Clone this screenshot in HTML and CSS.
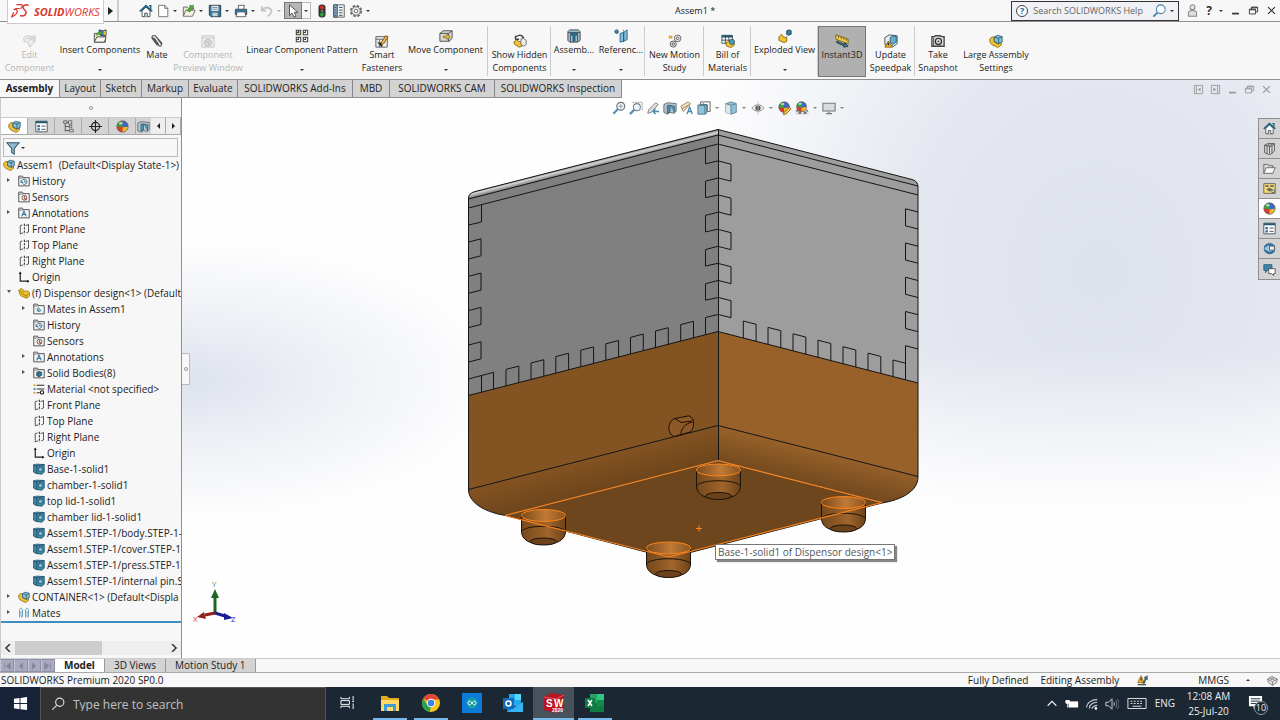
FILE: index.html
```html
<!DOCTYPE html>
<html lang="en">
<head>
<meta charset="utf-8">
<title>Assem1 - SOLIDWORKS</title>
<link rel="stylesheet" href="styles.css">
</head>
<body>
<svg class="defs" aria-hidden="true">
  <defs>
    <symbol id="home" viewBox="0 0 16 16"><path d="M3.5 8v6.5h9V8L8 3.5z" fill="#fff" stroke="#444"/><path d="M1 8.500 8 2l7 6.500" fill="none" stroke="#1f6080" stroke-width="2"/><path d="M11.500 2h2v4" fill="none" stroke="#1f6080" stroke-width="1.500"/><path d="M6.500 14.500v-4h3v4" fill="#cfe3ee" stroke="#444"/></symbol>
    <symbol id="newdoc" viewBox="0 0 16 16"><path d="M3 1.500h7l3.500 3.500v9.500H3z" fill="#fff" stroke="#666"/><path d="M10 1.500V5h3.500" fill="none" stroke="#666"/></symbol>
    <symbol id="opendoc" viewBox="0 0 16 16"><path d="M1.500 14V3.500H6L7.500 5H12v2" fill="#e9e4d0" stroke="#666"/><path d="m1.500 14 3-7H15l-3 7z" fill="#f6f3e4" stroke="#666"/><path d="m6 8 3.500-5.500L8 2l5-.5.500 4.500-1.500-1.500L9 9z" fill="#54a834" stroke="#2f6d1c" stroke-width=".5"/></symbol>
    <symbol id="save" viewBox="0 0 16 16"><path d="M1.500 1.500h13v13h-11l-2-2z" fill="#3d7797" stroke="#234"/><path d="M4 2h8v6H4z" fill="#e4edf2"/><path d="M5 4h6M5 6h6" stroke="#789"/><path d="M5 10h6v4H5z" fill="#c5d2da"/></symbol>
    <symbol id="print" viewBox="0 0 16 16"><path d="M5 6V1.500h7L11 6" fill="#fff" stroke="#555"/><path d="M1.500 6h13v6h-13z" fill="#2f7ca3" stroke="#345"/><path d="m3.500 9-1 5.500h11l-1-5.500z" fill="#fff" stroke="#555"/></symbol>
    <symbol id="undo" viewBox="0 0 16 16"><path d="M2 2.500v5h5M2.500 7C6 2.500 14 4 13 9c-.5 2-2 4-4.500 5" fill="none" stroke="#c4c4c4" stroke-width="2"/></symbol>
    <symbol id="cursor" viewBox="0 0 16 16"><path d="M4 1v12l3-2.500L9 15l2.500-1-2-4.500h4z" fill="#fff" stroke="#444"/></symbol>
    <symbol id="traffic" viewBox="0 0 16 16"><rect x="4" y=".5" width="8" height="15" rx="3.500" fill="#333"/><circle cx="8" cy="4" r="2.300" fill="#e22a20"/><circle cx="8" cy="8" r="1.500" fill="#775"/><circle cx="8" cy="12" r="2.300" fill="#26a63a"/></symbol>
    <symbol id="list" viewBox="0 0 16 16"><path d="M1 1.500h14v13H1z" fill="#fff" stroke="#345"/><path d="M1 1.500h14V4H1z" fill="#24586f"/><path d="M3 6h3v3H3zm0 4h3v3H3z" fill="#2c6f90"/><path d="M8 7.500h5M8 11.500h5" stroke="#333"/></symbol>
    <symbol id="sheet" viewBox="0 0 16 16"><path d="M2 1h12v14H2z" fill="#f3f3f3" stroke="#555"/><path d="M2 1h4v14H2z" fill="#8db8cc" stroke="#345"/><path d="M3 4h2M3 7h2M3 10h2M3 13h2M8 4h4M8 7h4M8 10h4M8 13h4" stroke="#345"/></symbol>
    <symbol id="gear" viewBox="0 0 16 16"><circle cx="8" cy="8" r="6" fill="none" stroke="#666" stroke-width="2" stroke-dasharray="3 1.700"/><circle cx="8" cy="8" r="4.800" fill="#eee" stroke="#666"/><circle cx="8" cy="8" r="2" fill="#fff" stroke="#666"/></symbol>
    <symbol id="part" viewBox="0 0 16 16"><path d="M1 4.500 4 2l3 1.500V7l3-2 4 1 1.500 2v4l-4 3-7.500-3-2-3z" fill="#f2c230" stroke="#97700d"/><path d="M1 4.500 4.500 6v3l6 2.500v3M10.500 11.500 15 8.500" fill="none" stroke="#97700d"/></symbol>
    <symbol id="asm" viewBox="0 0 16 16"><path d="M1 5.500 4 3l2 1v5l4 2.500 4-2v3L10 15.500 3 12 1 9z" fill="#f2c230" stroke="#8b6a15"/><path d="m6 3.500 3.500-2L15 3v6l-4 2-5-2.500z" fill="#87bfd5" stroke="#285b73"/><path d="m6 3.500 5 1.500 4-2M11 5v6" fill="none" stroke="#285b73"/></symbol>
    <symbol id="insert" viewBox="0 0 16 16"><path d="M1.500 15V5H7l1 2h6v8z" fill="#efe9c8" stroke="#444"/><path d="m7 1 4 1 4-1v6l-4 1-4-2z" fill="#2f7ca3" stroke="#245"/><path d="M12 2h3v5h-3z" fill="#f2b51f"/><path d="M3 8c1-5 4-6 7-4L8 7c-2-1-3 0-5 1z" fill="#52a536"/><path d="m1.500 15 3-6H15l-2 6z" fill="#faf8ec" stroke="#444"/></symbol>
    <symbol id="clip" viewBox="0 0 16 16"><path d="m2 3 8 10c1 1.500 4 1 3-1.500L7 3C5 .5 1 2 2.500 5l6 8M4.500 4.500 10 12M6 2l8 9" fill="none" stroke="#555" stroke-width="1.300"/></symbol>
    <symbol id="ghost" viewBox="0 0 16 16"><path d="M1 2h14v13H1zM1 4.500h14" fill="#eee" stroke="#c3c3c3"/><path d="m4 8 4-2 4 2v4l-4 2-4-2zM5 9h4v3" fill="#ddd" stroke="#b9b9b9"/></symbol>
    <symbol id="ghostpart" viewBox="0 0 16 16"><path d="m1 4 3-2 7 1 3-1v6l-6 7-2-5-5-2zM4 5h8v4M7 8l5-5" fill="#eee" stroke="#c3c3c3"/></symbol>
    <symbol id="pattern" viewBox="0 0 16 16"><g fill="#fff" stroke="#444" stroke-width="1.200"><path d="M9.500 1.500h5v5h-5zM1.500 9.500h5v5h-5zM9.500 9.500h5v5h-5z"/><path d="M1.500 1.500h5v5h-5z" fill="#e3d95c"/><path d="M4 1.500V4H1.500M12 1.500V4H9.500M4 9.500V12H1.500M12 9.500V12H9.500" fill="none"/></g></symbol>
    <symbol id="smart" viewBox="0 0 16 16"><path d="M1 3h13v12H1zM1 6h13" fill="#eee" stroke="#555"/><path d="M3 10h5v5M5 7v8" stroke="#555"/><path d="m7 10 5-8 3 1-5 8-3 1z" fill="#f1b73c" stroke="#7a4e18"/></symbol>
    <symbol id="move" viewBox="0 0 16 16"><path d="m1 5 4-3h10v8l-3 4H1z" fill="#d9d9cf" stroke="#444"/><path d="M1 5h10v9M11 5l4-3" fill="none" stroke="#444"/><path d="M5 8h4V6l4 3-4 3v-2H5z" fill="#f2cc3a" stroke="#6a540f" stroke-width=".7"/></symbol>
    <symbol id="hidden" viewBox="0 0 16 16"><path d="M2 5c2-4 8-5 10-1l-2 1M3 2v4h4" fill="none" stroke="#444" stroke-width="1.500"/><path d="m1 9 3-2 6 3v4l-3 1-5-3z" fill="#f2c230" stroke="#8b6a15"/><path d="m9 6 3-1 3 2v5l-3 2-3-2z" fill="#eee" stroke="#666"/></symbol>
    <symbol id="feature" viewBox="0 0 16 16"><path d="m1 3 2-2h10l2 2v10l-3 2H3l-2-2z" fill="#9bb9c7" stroke="#444"/><path d="M1 4h14M4 4v11M12 4v11" stroke="#456"/><path d="M5 5h6v2H9v7H7V7H5z" fill="#2478a3" stroke="#17506e"/></symbol>
    <symbol id="refgeo" viewBox="0 0 16 16"><circle cx="3" cy="3" r="2" fill="#3d87a9" stroke="#1e516b"/><path d="m7 5 4-1v10l-4 1zM11 4l4-3v11l-4 2z" fill="#84c0dd" stroke="#27617f"/><path d="M11 1v14" stroke="#27617f" stroke-dasharray="2 1"/></symbol>
    <symbol id="motion" viewBox="0 0 16 16"><path d="m1 2 4 3M1 5l4-3" stroke="#e79a28" stroke-width="1.500"/><circle cx="11" cy="5" r="3.800" fill="#eee" stroke="#555"/><circle cx="11" cy="5" r="1.500" fill="none" stroke="#555"/><circle cx="6" cy="11.500" r="3.500" fill="#ddd" stroke="#555"/><circle cx="6" cy="11.500" r="1.300" fill="#fff" stroke="#555"/></symbol>
    <symbol id="bom" viewBox="0 0 16 16"><path d="M1 1.500h12v9H1z" fill="#fff" stroke="#345"/><path d="M1 1.500h12V4H1z" fill="#24586f"/><path d="M1 7h12M5 2v9M9 2v9" stroke="#345"/><path d="m6 10 3-2 2 1 4-1v5l-4 2.500-5-2z" fill="#f2c230" stroke="#86650f"/><path d="m10 7 3-1 2 1v4l-3 1-2-1z" fill="#4d9fc0" stroke="#285b73"/></symbol>
    <symbol id="explode" viewBox="0 0 16 16"><path d="m1 9 3-3 2 3 4 1v4l-3 1.500L1 13z" fill="#f2c230" stroke="#86650f"/><path d="m10 2 3-1 2 1v4l-3 1-2-1z" fill="#3a7ea0" stroke="#173f55"/><path d="M10 6v4" stroke="#3a7ea0" stroke-dasharray="1 1"/></symbol>
    <symbol id="instant" viewBox="0 0 16 16"><path d="m1 1 14 5v5L1 6z" fill="#f5d44e" stroke="#755b12"/><path d="M4 2v3M7 3v3M10 4v3M13 5v3" stroke="#755b12"/><path d="m2 8 9 4v-2l4 4-5 1 .5-1.500L2 10z" fill="#3d7f9f" stroke="#234"/></symbol>
    <symbol id="speedpak" viewBox="0 0 16 16"><path d="m1 4 5-3 9 1v9l-4 3-10-2z" fill="#e8f0f4" stroke="#345"/><path d="m7 4 3-2 4 1v6l-4 3-3-2z" fill="#69aecb" stroke="#265a73"/><path d="m1 15 4-7 4.500 7z" fill="#f7c01f" stroke="#805b05"/><path d="M5 10v3" stroke="#222" stroke-width="1.500"/></symbol>
    <symbol id="camera" viewBox="0 0 16 16"><path d="M1 3h3l1-1h6l1 1h3v11H1z" fill="#ddd" stroke="#444" stroke-width="1.500"/><circle cx="8.500" cy="8.500" r="3.500" fill="#eee" stroke="#333" stroke-width="1.500"/><circle cx="8.500" cy="8.500" r="1.200" fill="#444"/><path d="M3 4v10" stroke="#444"/></symbol>
    <symbol id="tree" viewBox="0 0 16 16"><path d="M4 2v12M4 3h4M4 8h6M4 13h6" stroke="#444" fill="none"/><path d="M2 1h4v3H2zM8 1h4v4H8zM9 6.500h3v3H9zM9 11.500h5v3H9z" fill="#ddd" stroke="#555"/></symbol>
    <symbol id="target" viewBox="0 0 16 16"><circle cx="8" cy="8" r="5" fill="none" stroke="#222" stroke-width="1.400"/><path d="M8 0v16M0 8h16" stroke="#222" stroke-width="1.400"/></symbol>
    <symbol id="ball" viewBox="0 0 16 16"><circle cx="8" cy="8" r="7" fill="#d93a2b"/><path d="M8 1a7 7 0 0 0-7 7l7 1z" fill="#38a046"/><path d="M8 9v6a7 7 0 0 0 7-7z" fill="#e9bd2c"/><path d="M8 1v8l7-1a7 7 0 0 0-7-7z" fill="#3769c8"/><circle cx="8" cy="8" r="7" fill="none" stroke="#555" stroke-width=".7"/><ellipse cx="6" cy="4" rx="2.500" ry="1.500" fill="#fff" opacity=".6"/></symbol>
    <symbol id="funnel" viewBox="0 0 16 16"><path d="M1 2h14L9.500 8.500V15L6.500 13V8.500z" fill="#8fb9cc" stroke="#37566a" stroke-width="1.200"/></symbol>
    <symbol id="folder" viewBox="0 0 16 16"><path d="M1 14.500V1.500h5l1 2h8v11z" fill="#f4f4f4" stroke="#555" stroke-width="1.300"/><path d="M1 4h6l1-1" fill="none" stroke="#555"/></symbol>
    <symbol id="f-history" viewBox="0 0 16 16"><use href="#folder"/><path d="M5 9a3.500 3.500 0 1 1 1 2.500M4 7v3h3M9 7v2.500h2" fill="none" stroke="#2b6d8d" stroke-width="1.200"/></symbol>
    <symbol id="f-sensor" viewBox="0 0 16 16"><use href="#folder"/><circle cx="8.500" cy="9" r="3.200" fill="#fff" stroke="#333"/><path d="m8 9 3 3M8 9l1-2" stroke="#c3342a" stroke-width="1.500"/></symbol>
    <symbol id="f-note" viewBox="0 0 16 16"><use href="#folder"/><path d="m5 12.500 3-7 3 7M6 10h4" fill="none" stroke="#26759b" stroke-width="1.500"/></symbol>
    <symbol id="f-mates" viewBox="0 0 16 16"><use href="#folder"/><path d="m5 7 4 5M7 6l4 5M5 9l3 3" stroke="#3b86a8" stroke-width="1.400"/></symbol>
    <symbol id="f-solid" viewBox="0 0 16 16"><use href="#folder"/><path d="m5 7 3-1 3.500 1v4L8 13l-3-1.500z" fill="#2d7797" stroke="#183f52"/></symbol>
    <symbol id="material" viewBox="0 0 16 16"><circle cx="2" cy="3" r="1.500" fill="#d7a829"/><circle cx="2" cy="8" r="1.500" fill="#3b86a8"/><circle cx="2" cy="13" r="1.500" fill="#d7a829"/><path d="M5 3h10M5 8h10M5 13h4" stroke="#222" stroke-width="1.300"/><circle cx="12" cy="12.500" r="2.200" fill="none" stroke="#222" stroke-width="1.500"/></symbol>
    <symbol id="plane" viewBox="0 0 16 16"><path d="M6 2.500 3 3.500v11l4-1.500M10 3.500l4-1.500v10l-3 1" fill="none" stroke="#444" stroke-width="1.200"/><path d="M8.500 1v14" stroke="#222" stroke-width="1.300" stroke-dasharray="3 1.500"/></symbol>
    <symbol id="origin" viewBox="0 0 16 16"><path d="M3 2v11.500h11" fill="none" stroke="#222" stroke-width="1.600"/><path d="m1 4 2-3.500L5 4zM12 11.500l3.500 2-3.500 2z" fill="#222"/></symbol>
    <symbol id="solid" viewBox="0 0 16 16"><path d="m.5 2.500 4-1L15 2v10l-3 3-8-1-3.500-2z" fill="#3b88aa" stroke="#1c4a60"/><path d="M.5 2.500 5 4l10-2M5 4v10" fill="none" stroke="#1c4a60"/><circle cx="10" cy="8.500" r="3" fill="#7bbbd6" stroke="#1c4a60"/></symbol>
    <symbol id="mates" viewBox="0 0 16 16"><path d="M2 14V4c0-3 4-3 4 0v8c0 2-2 2-2 0V5M10 14V4c0-3 4-3 4 0v8c0 2-2 2-2 0V5" fill="none" stroke="#5d9dbd" stroke-width="1.200"/></symbol>
    <symbol id="lens" viewBox="0 0 16 16"><circle cx="10" cy="6" r="4.500" fill="#eef5f9" stroke="#68737c" stroke-width="1.300"/><path d="M10 3.500v5M7.500 6h5" stroke="#8a9299"/><path d="m6.500 9.500-5 5" stroke="#5590ae" stroke-width="2.500"/></symbol>
    <symbol id="lensbox" viewBox="0 0 16 16"><path d="M4 1.500h11v10" fill="none" stroke="#888" stroke-dasharray="2 1"/><circle cx="9" cy="7" r="4" fill="#eef5f9" stroke="#7b868f" stroke-width="1.200"/><path d="m6 10-5 5" stroke="#5590ae" stroke-width="2.500"/></symbol>
    <symbol id="prev" viewBox="0 0 16 16"><path d="m3 10 8-8 3 2-8 9-4 1z" fill="#ddd" stroke="#777"/><path d="M8 12h7M11 9l-3 3 3 3" fill="none" stroke="#4a8cab" stroke-width="1.600"/></symbol>
    <symbol id="section" viewBox="0 0 16 16"><path d="m1 4 4-2 10 1v9l-3 2-4-1-3 2-4-2z" fill="#b9c5cc" stroke="#566"/><path d="M5 5v9l3-2V5zM8 5l5 1v8" fill="#4c95b7" stroke="#385e71"/></symbol>
    <symbol id="dyn" viewBox="0 0 16 16"><path d="m1 6 8-5 3 2-8 9zM2 9l9-5" fill="#f1e5c8" stroke="#987b51"/><path d="m8 15 3-8 3 8M9 12h4" fill="none" stroke="#4387aa" stroke-width="1.500"/></symbol>
    <symbol id="orient" viewBox="0 0 16 16"><path d="M4 4V1h11v11h-3" fill="none" stroke="#555"/><path d="m1 5 3-1h7v10l-2 1H1z" fill="#8fc3da" stroke="#4a7085"/><path d="M1 5h8v10M9 5l2-1" fill="none" stroke="#4a7085"/><path d="M12 4v8M7 2v3" stroke="#666"/></symbol>
    <symbol id="shade" viewBox="0 0 16 16"><path d="m2 3 6-2 6 2v10l-6 2-6-2z" fill="#8fc3da" stroke="#5f7b88"/><path d="m2 3 6 2v10l-6-2z" fill="#d9e8ee"/><path d="m2 3 6 2 6-2M8 5v10" fill="none" stroke="#5f7b88"/></symbol>
    <symbol id="eye" viewBox="0 0 16 16"><path d="M1 8c4-5 10-5 14 0-4 5-10 5-14 0z" fill="#eee" stroke="#888"/><circle cx="8" cy="8" r="3" fill="#555"/><path d="M8 1v14" stroke="#bbb"/></symbol>
    <symbol id="ballpen" viewBox="0 0 16 16"><use href="#ball" width="14" height="14"/><path d="m7 13 6-6 2 2-6 6-3 .5z" fill="#f0c860" stroke="#85601d"/></symbol>
    <symbol id="scene" viewBox="0 0 16 16"><path d="M1 10h14v5H1z" fill="#777"/><path d="M1 12h3v3H1zm6 0h3v3H7zm6 0h2v3h-2zM4 10h3v2H4zm6 0h3v2h-3z" fill="#ddd"/><use href="#ball" x="1" width="13" height="13"/></symbol>
    <symbol id="monitor" viewBox="0 0 16 16"><path d="M1 2.500h14v9H1z" fill="#d8dcdf" stroke="#777" stroke-width="1.200"/><path d="M8 12v2.500M4.500 14.500h7" stroke="#777" stroke-width="1.500"/></symbol>
    <symbol id="library" viewBox="0 0 16 16"><path d="m2 4 4-2 8 0v9l-4 4-4 0-4-2z" fill="#ddd" stroke="#444"/><path d="m2 4 3 1v9M5 5l3-3M8 5v9M8 5l4-3M11 5v9M11 5l3-3M5 5h6" fill="none" stroke="#444"/></symbol>
    <symbol id="bigfolder" viewBox="0 0 16 16"><path d="M1 14V3h5l1 1.500h5V7" fill="#ddd" stroke="#555"/><path d="m1 14 3-7h11l-3 7z" fill="#f7f7f7" stroke="#555"/></symbol>
    <symbol id="palette" viewBox="0 0 16 16"><path d="M1 2h14v12H1z" fill="#f4dc70" stroke="#555"/><path d="M3 4h4v2H3zm6 0h4v2H9zM4 9l4-2 4 2-4 3z" fill="#666"/><path d="M11 10h3v3h-3z" fill="#fff" stroke="#555"/></symbol>
    <symbol id="globe" viewBox="0 0 16 16"><circle cx="8" cy="8" r="6.500" fill="#9bc7df" stroke="#31617c"/><path d="M2 6c4-5 8-2 12-1M2 10c4 4 8 4 12 1" fill="none" stroke="#286b9e" stroke-width="2.200"/><path d="M8 5h6v5H8z" fill="#eee" stroke="#555"/></symbol>
    <symbol id="chat" viewBox="0 0 16 16"><path d="M1 2h10v7H5l-2 3V9H1z" fill="#3a85aa" stroke="#245a76"/><path d="M7 7h8v6h-2v2.500L10.500 13H7z" fill="#fff" stroke="#444"/></symbol>
    <symbol id="chip" viewBox="0 0 16 16"><path d="m1 6 6-4 8 4-1 5-6 4-6-4z" fill="#e8e8e8" stroke="#555"/><path d="m1 6 7 4 7-4M8 10v5M4 4l8 4M10 4 4 8" fill="none" stroke="#666"/></symbol>
    <symbol id="rebuild" viewBox="0 0 16 16"><path d="m1 11 5-10 4 10z" fill="#f7b51f" stroke="#7c5808"/><path d="M6 4v4" stroke="#222" stroke-width="1.500"/><path d="M1 13h12v2H1z" fill="#555"/><path d="m8 12 4-7-2-1 5-3v6l-2-1-2 6z" fill="#3f6f88" stroke="#333" stroke-width=".7"/></symbol>
    <symbol id="restore" viewBox="0 0 16 16"><path d="M2 6h9v7H2zM5 6V3h9v7h-3M2 7h9M5 4h9" fill="none" stroke="currentColor" stroke-width="1.300"/></symbol>
    <symbol id="cross" viewBox="0 0 16 16"><path d="m3 3 10 10M13 3 3 13" stroke="currentColor" stroke-width="1.700"/></symbol>
    <symbol id="mini" viewBox="0 0 16 16"><path d="M3 12.500h10" stroke="currentColor" stroke-width="2.500"/></symbol>
    <symbol id="dockl" viewBox="0 0 16 16"><path d="M2 2h12v12H2zM5 2v12" fill="none" stroke="currentColor" stroke-width="1.300"/><path d="m11 5-4 3 4 3z" fill="currentColor"/></symbol>
    <symbol id="dockr" viewBox="0 0 16 16"><path d="M2 2h12v12H2zM11 2v12" fill="none" stroke="currentColor" stroke-width="1.300"/><path d="m5 5 4 3-4 3z" fill="currentColor"/></symbol>
    <symbol id="user" viewBox="0 0 16 16"><circle cx="8" cy="4" r="3" fill="#e6e6e6" stroke="#888" stroke-width="1.300"/><path d="M3 15v-4c0-4 10-4 10 0v4z" fill="#ddd" stroke="#888" stroke-width="1.300"/></symbol>
    <linearGradient id="lidShine" x1="590" y1="162" x2="591.400" y2="167.600" gradientUnits="userSpaceOnUse"><stop offset="0" stop-color="#8c8c8c"/><stop offset=".4" stop-color="#d2d2d2"/><stop offset="1" stop-color="#808080"/></linearGradient>
    <linearGradient id="filletL" x1="594" y1="456" x2="604" y2="495" gradientUnits="userSpaceOnUse"><stop offset="0" stop-color="#845322"/><stop offset="1" stop-color="#6b431a"/></linearGradient>
    <linearGradient id="filletR" x1="818" y1="450" x2="809" y2="488" gradientUnits="userSpaceOnUse"><stop offset="0" stop-color="#98612a"/><stop offset="1" stop-color="#6e461d"/></linearGradient>
    <linearGradient id="footSide"><stop offset="0" stop-color="#76481a"/><stop offset=".6" stop-color="#a0652b"/><stop offset="1" stop-color="#6d431a"/></linearGradient>
    <linearGradient id="footTop"><stop offset="0" stop-color="#7b4b1d"/><stop offset=".55" stop-color="#c27a36"/><stop offset="1" stop-color="#8a5522"/></linearGradient>
    <g id="foot"><path d="M-22 0v16c0 8 8 13 22 13s22-5 22-13V0z" fill="url(#footSide)" stroke="#1b1209"/><path d="M-22 16c4-7 40-7 44 0" fill="none" stroke="#1b1209"/><ellipse cy="26" rx="13" ry="3.500" fill="#6b421a" stroke="#1b1209"/><ellipse rx="22" ry="6" fill="url(#footTop)" stroke="#ff8418"/></g>
    <path id="toothL" d="M0 0 12.500-3.200v17L0 17"/>
    <path id="toothC" d="M0 0-12.500 3.200v16.500L0 17"/>
    <path id="toothR" d="M0 0 12.500 3.200v17L0 17"/>
    <path id="toothE" d="M0 0-12.500-3.200v17L0 17"/>
    <path id="toothB" d="M0 0V-16.500L12.800-19.800V-3.300"/>
    <path id="toothD" d="M0 0V-17L12.800-13.700V3.300"/>
  </defs>
</svg>

<header class="titlebar">
  <div class="brand">
    <svg class="brand-mark" viewBox="0 0 28 24" aria-hidden="true"><path d="M8 2h7c3 0 2 3-1 6M13 8c-3-1-7 0-8 1 5 0 5 3 3 6-2 3-4 4-7 5l3-7" fill="none" stroke="#d8372c" stroke-width="1.800"/><path d="M26 3c-5-2-9 0-8 4 1 3 6 4 4 8-1 3-5 4-9 3" fill="none" stroke="#d8372c" stroke-width="2.200"/></svg>
    <span class="brand-name"><b>SOLID</b>WORKS</span>
  </div>
  <button class="brand-more" aria-label="Show menu"><i class="tri-right"></i></button>
  <nav class="quick" aria-label="Quick access">
    <button aria-label="Home"><svg><use href="#home"/></svg></button>
    <button aria-label="New"><svg><use href="#newdoc"/></svg></button><i class="drop"></i>
    <button aria-label="Open"><svg><use href="#opendoc"/></svg></button><i class="drop"></i>
    <button aria-label="Save"><svg><use href="#save"/></svg></button><i class="drop"></i>
    <button aria-label="Print"><svg><use href="#print"/></svg></button><i class="drop"></i>
    <button aria-label="Undo"><svg><use href="#undo"/></svg></button><i class="drop faded"></i>
    <button class="pressed" aria-label="Select"><svg><use href="#cursor"/></svg></button><span class="boxed"><i class="drop"></i></span>
    <button aria-label="Rebuild"><svg><use href="#traffic"/></svg></button>
    <button aria-label="File properties"><svg><use href="#sheet"/></svg></button>
    <button aria-label="Options"><svg><use href="#gear"/></svg></button><i class="drop"></i>
  </nav>
  <h1 class="doc-title">Assem1 *</h1>
  <div class="title-right">
    <label class="help-search"><span class="help-q">?</span><input type="text" placeholder="Search SOLIDWORKS Help" aria-label="Search SOLIDWORKS Help"><svg viewBox="0 0 16 16"><circle cx="10" cy="6" r="5" fill="#fff" stroke="#4a7fa8" stroke-width="1.200"/><path d="m6.500 9.500-5 5" stroke="#4a7fa8" stroke-width="2"/></svg><i class="drop"></i></label>
    <button aria-label="Account"><svg><use href="#user"/></svg></button>
    <button class="question" aria-label="Help">?</button><i class="drop"></i>
    <button aria-label="Minimize"><svg><use href="#mini"/></svg></button>
    <button aria-label="Restore"><svg><use href="#restore"/></svg></button>
    <button aria-label="Close"><svg><use href="#cross"/></svg></button>
  </div>
</header>

<div class="ribbon">
  <button class="cmd off" disabled><svg><use href="#ghostpart"/></svg>Edit<br>Component</button>
  <button class="cmd menu"><svg><use href="#insert"/></svg>Insert Components<i class="drop"></i></button>
  <button class="cmd single"><svg><use href="#clip"/></svg>Mate</button>
  <button class="cmd off" disabled><svg><use href="#ghost"/></svg>Component<br>Preview Window</button>
  <button class="cmd menu"><svg><use href="#pattern"/></svg>Linear Component Pattern<i class="drop"></i></button>
  <button class="cmd"><svg><use href="#smart"/></svg>Smart<br>Fasteners</button>
  <button class="cmd menu end"><svg><use href="#move"/></svg>Move Component<i class="drop"></i></button>
  <button class="cmd end"><svg><use href="#hidden"/></svg>Show Hidden<br>Components</button>
  <button class="cmd menu"><svg><use href="#feature"/></svg>Assemb...<i class="drop"></i></button>
  <button class="cmd menu end"><svg><use href="#refgeo"/></svg>Referenc...<i class="drop"></i></button>
  <button class="cmd end"><svg><use href="#motion"/></svg>New Motion<br>Study</button>
  <button class="cmd end"><svg><use href="#bom"/></svg>Bill of<br>Materials</button>
  <button class="cmd menu end"><svg><use href="#explode"/></svg>Exploded View<i class="drop"></i></button>
  <button class="cmd active"><svg><use href="#instant"/></svg>Instant3D</button>
  <button class="cmd end"><svg><use href="#speedpak"/></svg>Update<br>Speedpak</button>
  <button class="cmd"><svg><use href="#camera"/></svg>Take<br>Snapshot</button>
  <button class="cmd"><svg><use href="#asm"/></svg>Large Assembly<br>Settings</button>
</div>

<main class="workspace">
  <div class="tab-row">
    <div class="cmd-tabs" role="tablist">
      <button class="tab current" role="tab">Assembly</button><button class="tab" role="tab">Layout</button><button class="tab" role="tab">Sketch</button><button class="tab" role="tab">Markup</button><button class="tab" role="tab">Evaluate</button><button class="tab" role="tab">SOLIDWORKS Add-Ins</button><button class="tab" role="tab">MBD</button><button class="tab" role="tab">SOLIDWORKS CAM</button><button class="tab" role="tab">SOLIDWORKS Inspection</button>
    </div>
    <div class="doc-controls">
      <button aria-label="Collapse left"><svg><use href="#dockl"/></svg></button>
      <button aria-label="Collapse right"><svg><use href="#dockr"/></svg></button>
      <button aria-label="Minimize document"><svg><use href="#mini"/></svg></button>
      <button aria-label="Restore document"><svg><use href="#restore"/></svg></button>
      <button aria-label="Close document"><svg><use href="#cross"/></svg></button>
    </div>
  </div>
  <div class="stage">
    <aside class="panel">
      <div class="grip"><i></i></div>
      <div class="panel-tabs">
        <button class="current" aria-label="Design tree"><svg><use href="#asm"/></svg></button>
        <button aria-label="Properties"><svg><use href="#list"/></svg></button>
        <button aria-label="Configurations"><svg><use href="#tree"/></svg></button>
        <button aria-label="Dimensions"><svg><use href="#target"/></svg></button>
        <button aria-label="Appearances"><svg><use href="#ball"/></svg></button>
        <button class="cut" aria-label="CAM"><svg><use href="#section"/></svg></button>
        <button class="arrow" aria-label="Scroll left"><i class="tri-left"></i></button>
        <button class="arrow" aria-label="Scroll right"><i class="tri-right"></i></button>
      </div>
      <label class="filter"><svg><use href="#funnel"/></svg><i class="drop"></i><input type="text" aria-label="Filter"></label>
      <ul class="tree">
        <li class="root"><svg><use href="#asm"/></svg>Assem1&nbsp; (Default&lt;Display State-1&gt;)</li>
        <li class="branch"><svg><use href="#f-history"/></svg>History</li>
        <li><svg><use href="#f-sensor"/></svg>Sensors</li>
        <li class="branch"><svg><use href="#f-note"/></svg>Annotations</li>
        <li><svg><use href="#plane"/></svg>Front Plane</li>
        <li><svg><use href="#plane"/></svg>Top Plane</li>
        <li><svg><use href="#plane"/></svg>Right Plane</li>
        <li><svg><use href="#origin"/></svg>Origin</li>
        <li class="branch open"><svg><use href="#part"/></svg>(f) Dispensor design&lt;1&gt; (Default</li>
        <li class="sub branch"><svg><use href="#f-mates"/></svg>Mates in Assem1</li>
        <li class="sub"><svg><use href="#f-history"/></svg>History</li>
        <li class="sub"><svg><use href="#f-sensor"/></svg>Sensors</li>
        <li class="sub branch"><svg><use href="#f-note"/></svg>Annotations</li>
        <li class="sub branch"><svg><use href="#f-solid"/></svg>Solid Bodies(8)</li>
        <li class="sub"><svg><use href="#material"/></svg>Material &lt;not specified&gt;</li>
        <li class="sub"><svg><use href="#plane"/></svg>Front Plane</li>
        <li class="sub"><svg><use href="#plane"/></svg>Top Plane</li>
        <li class="sub"><svg><use href="#plane"/></svg>Right Plane</li>
        <li class="sub"><svg><use href="#origin"/></svg>Origin</li>
        <li class="sub"><svg><use href="#solid"/></svg>Base-1-solid1</li>
        <li class="sub"><svg><use href="#solid"/></svg>chamber-1-solid1</li>
        <li class="sub"><svg><use href="#solid"/></svg>top lid-1-solid1</li>
        <li class="sub"><svg><use href="#solid"/></svg>chamber lid-1-solid1</li>
        <li class="sub"><svg><use href="#solid"/></svg>Assem1.STEP-1/body.STEP-1-</li>
        <li class="sub"><svg><use href="#solid"/></svg>Assem1.STEP-1/cover.STEP-1-</li>
        <li class="sub"><svg><use href="#solid"/></svg>Assem1.STEP-1/press.STEP-1-</li>
        <li class="sub"><svg><use href="#solid"/></svg>Assem1.STEP-1/internal pin.ST</li>
        <li class="branch"><svg><use href="#asm"/></svg>CONTAINER&lt;1&gt; (Default&lt;Displa</li>
        <li class="branch"><svg><use href="#mates"/></svg>Mates</li>
      </ul>
      <div class="rollback"></div>
      <div class="hscroll"><button aria-label="Scroll left"><svg viewBox="0 0 8 8"><path d="M6 0 2 4l4 4" fill="none" stroke="#333" stroke-width="1.500"/></svg></button><i></i><button aria-label="Scroll right"><svg viewBox="0 0 8 8"><path d="m2 0 4 4-4 4" fill="none" stroke="#333" stroke-width="1.500"/></svg></button></div>
    </aside>
    <section class="canvas" aria-label="Model view">
      <svg class="model" viewBox="182 98 1098 560" role="img" aria-label="Box with four feet">
        <path d="M468.500 198Q468.500 193 476 191.300L718 129.500V432L468.500 490z" fill="#808080"/>
        <path d="M718 129.500 912 179.500Q918 181 918 187V478L718 432z" fill="#9d9d9d"/>
        <path d="M469 198Q469 193 476 191.300L718 129.500V135L468.500 199z" fill="url(#lidShine)"/>
        <path d="M468.500 395.500 718 331.500V425.500L468.500 489.500z" fill="#835321"/>
        <path d="M718 331.500 918 383V476.500L718 425.500z" fill="#98612a"/>
        <path d="M468.500 489.500 718 425.500V461L506 515.500C488 513 468.500 504 468.500 489.500z" fill="url(#filletL)"/>
        <path d="M718 425.500 918 476.500C918 492 900 500 882 503L718 461z" fill="url(#filletR)"/>
        <path d="M505 515.500 718 461 882 503 669 558z" fill="#6e461d"/>
        <g fill="none" stroke="#151515">
          <path d="M468.500 490V198Q468.500 193 476 191.300L718 129.500 912 179.500Q918 181 918 187V477C918 492 900 500 882 503L669 558 506 515.500C488 513 468.500 504 468.500 489.500"/>
          <path d="M468.500 199 718 135 918 186M468.500 208 718 144 918 195M718.500 130V461M468.500 395.500 718 331.500 918 383M468.500 489.500 718 425.500 918 476.500"/>
          <path d="M481.500 205v17l-13 3M705.500 147.300v16.500l13-3"/>
          <use href="#toothL" x="468.500" y="242"/><use href="#toothL" x="468.500" y="276.300"/><use href="#toothL" x="468.500" y="310.600"/><use href="#toothL" x="468.500" y="345"/>
          <path d="M468.500 379 493.500 372.300V389M481.500 376v16"/>
          <use href="#toothC" x="718" y="178"/><use href="#toothC" x="718" y="212.200"/><use href="#toothC" x="718" y="246.300"/><use href="#toothC" x="718" y="280.500"/>
          <path d="M718 314.500 705.500 317.500V335"/>
          <use href="#toothR" x="718.500" y="161"/><use href="#toothR" x="718.500" y="195"/><use href="#toothR" x="718.500" y="229.500"/><use href="#toothR" x="718.500" y="263.500"/><use href="#toothR" x="718.500" y="297.500"/>
          <use href="#toothE" x="918" y="212"/><use href="#toothE" x="918" y="246.200"/><use href="#toothE" x="918" y="280.500"/><use href="#toothE" x="918" y="314.700"/>
          <path d="M918 349 905.500 345.700V379.500M893 376.500V360l12.500 3.200"/>
          <use href="#toothB" x="506" y="385.900"/><use href="#toothB" x="531" y="379.500"/><use href="#toothB" x="555.800" y="373.100"/><use href="#toothB" x="580.800" y="366.700"/><use href="#toothB" x="605.800" y="360.300"/><use href="#toothB" x="630.500" y="353.900"/><use href="#toothB" x="655.500" y="347.500"/><use href="#toothB" x="680.700" y="341.100"/>
          <use href="#toothD" x="743.300" y="338"/><use href="#toothD" x="768" y="344.400"/><use href="#toothD" x="793" y="350.800"/><use href="#toothD" x="818" y="357.200"/><use href="#toothD" x="843" y="363.700"/><use href="#toothD" x="868" y="370.100"/>
        </g>
        <path d="M674 436.500C667 434 667 421 675 418.500L689 415.800C696 418 694 430 690 432z" fill="#8d5927" stroke="#1b1209"/>
        <path d="M675 418.500 681 422.500 692.500 421M681 436C680 429 686 423 692.500 422" fill="none" stroke="#1b1209"/>
        <use href="#foot" x="543.500" y="515.500"/><use href="#foot" x="718.500" y="470"/><use href="#foot" x="843.500" y="502.500"/><use href="#foot" x="668.500" y="548"/>
        <path d="M505 515.500 718 460.500 882 502.500 669 557z" fill="none" stroke="#f58220" stroke-width="1.200"/>
        <path d="M696 528.500h6M699 525.500v6" stroke="#ff8418"/>
        <g class="triad">
          <path d="M215 613v-16" stroke="#1c6423" stroke-width="3"/><path d="m211 598 4-9 4 9z" fill="#1c6423"/>
          <path d="m215 613-10 2" stroke="#911f1f" stroke-width="3"/><path d="m197 617 7-5 2 7z" fill="#911f1f"/>
          <path d="m215 613 10 3" stroke="#1c1c99" stroke-width="3"/><path d="m233 618-9-5v7z" fill="#1c1c99"/>
          <text x="212" y="587" fill="#2f9a3a">Y</text><text x="193" y="622" fill="#d33">X</text><text x="231" y="622" fill="#33c">Z</text>
        </g>
      </svg>
      <div class="panel-handle"><i></i></div>
      <nav class="heads-up" aria-label="View tools">
        <button aria-label="Zoom to fit"><svg><use href="#lens"/></svg></button>
        <button aria-label="Zoom to area"><svg><use href="#lensbox"/></svg></button>
        <button aria-label="Previous view"><svg><use href="#prev"/></svg></button>
        <button aria-label="Section view"><svg><use href="#section"/></svg></button>
        <button aria-label="Annotation views"><svg><use href="#dyn"/></svg></button>
        <button aria-label="View orientation"><svg><use href="#orient"/></svg></button><i class="drop"></i>
        <button aria-label="Display style"><svg><use href="#shade"/></svg></button><i class="drop"></i>
        <button aria-label="Hide or show items"><svg><use href="#eye"/></svg></button><i class="drop"></i>
        <button aria-label="Edit appearance"><svg><use href="#ballpen"/></svg></button>
        <button aria-label="Apply scene"><svg><use href="#scene"/></svg></button><i class="drop"></i>
        <button aria-label="View settings"><svg><use href="#monitor"/></svg></button><i class="drop"></i>
      </nav>
      <nav class="task-pane" aria-label="Task pane">
        <button aria-label="Resources"><svg><use href="#home"/></svg></button>
        <button aria-label="Design library"><svg><use href="#library"/></svg></button>
        <button aria-label="File explorer"><svg><use href="#bigfolder"/></svg></button>
        <button aria-label="View palette"><svg><use href="#palette"/></svg></button>
        <button class="current" aria-label="Appearances"><svg><use href="#ball"/></svg></button>
        <button aria-label="Custom properties"><svg><use href="#list"/></svg></button>
        <button aria-label="Forum"><svg><use href="#globe"/></svg></button>
        <button aria-label="Comments"><svg><use href="#chat"/></svg></button>
      </nav>
      <div class="tooltip" role="tooltip">Base-1-solid1 of Dispensor design&lt;1&gt;</div>
    </section>
  </div>
</main>

<div class="view-tabs">
  <div class="tab-nav">
    <button aria-label="First"><svg viewBox="0 0 10 10"><path d="M2 1v8M9 1 4 5l5 4z"/></svg></button>
    <button aria-label="Previous"><svg viewBox="0 0 10 10"><path d="M7 1 3 5l4 4z"/></svg></button>
    <button aria-label="Next"><svg viewBox="0 0 10 10"><path d="m3 1 4 4-4 4z"/></svg></button>
    <button aria-label="Last"><svg viewBox="0 0 10 10"><path d="m1 1 5 4-5 4zM8 1v8"/></svg></button>
  </div>
  <button class="vtab current">Model</button><button class="vtab">3D Views</button><button class="vtab">Motion Study 1</button>
</div>

<footer class="status">
  <span>SOLIDWORKS Premium 2020 SP0.0</span>
  <span class="status-right"><span>Fully Defined</span><span>Editing Assembly</span><svg class="state"><use href="#rebuild"/></svg><span class="units">MMGS</span><i class="tri-up"></i><svg><use href="#chip"/></svg></span>
</footer>

<footer class="taskbar">
  <button class="start" aria-label="Start"><svg viewBox="0 0 16 16"><path d="m1 3 6-1v5.500H1zM8 2l7-1v6.500H8zM1 8.500h6V14l-6-1zM8 8.500h7V15l-7-1z" fill="#fff"/></svg></button>
  <label class="os-search"><svg viewBox="0 0 16 16"><circle cx="10" cy="6" r="4.700" fill="none" stroke="#ddd" stroke-width="1.300"/><path d="m6.500 9.500-5 5" stroke="#ddd" stroke-width="1.300"/></svg><input type="text" placeholder="Type here to search" aria-label="Type here to search"></label>
  <nav class="apps" aria-label="Apps">
    <button class="task-view" aria-label="Task view"><svg class="thin" viewBox="0 0 16 16"><path d="M1 2v2h9V2M1 14v-2h9v2M1 6h9v4H1zM14 1v5M14 9v6M13 7h2" fill="none" stroke="#fff"/></svg></button>
    <button class="running" aria-label="File Explorer"><svg viewBox="0 0 20 20"><path d="M1 3h6l2 2h10v13H1z" fill="#e8a91d"/><path d="M1 7h18v11H1z" fill="#ffd866"/><path d="M4 18v-7h12v7h-3v-4H7v4z" fill="#3f9bd8"/></svg></button>
    <button class="running" aria-label="Chrome"><svg viewBox="0 0 20 20"><circle cx="10" cy="10" r="9" fill="#fbc61a"/><path d="M10 10 2.200 5.500A9 9 0 0 1 18.300 6.500H10z" fill="#e0483a"/><path d="M2.200 5.500 6.600 12 10 14l-1.500 5A9 9 0 0 1 2.200 5.500z" fill="#2da04e"/><circle cx="10" cy="10" r="4.300" fill="#fff"/><circle cx="10" cy="10" r="3.300" fill="#3f7fe8"/></svg></button>
    <button aria-label="Arduino"><svg viewBox="0 0 20 20"><path d="M0 0h20v20H0z" fill="#0d7bd8"/><circle cx="10" cy="10" r="5.500" fill="#16a0a6"/><path d="M10 10c-2-3-4-2-4 0s2 3 4 0 4-2 4 0-2 3-4 0z" fill="none" stroke="#fff"/></svg></button>
    <button aria-label="Outlook"><svg viewBox="0 0 20 20"><path d="M6 1h12v12H6z" fill="#28a8ea"/><path d="M12 1h6v6h-6z" fill="#50d9ff"/><path d="m4 9 8 5 8-5v10H4z" fill="#1681d7"/><path d="M4 19 20 9v10z" fill="#37b4f0"/><path d="M0 5h11v11H0z" fill="#0f6cbd"/><circle cx="5.500" cy="10.500" r="2.500" fill="none" stroke="#fff" stroke-width="1.500"/></svg></button>
    <button class="running focus" aria-label="SOLIDWORKS"><svg viewBox="0 0 20 20"><path d="m0 4 7-4 13 2v13l-8 5-12-3z" fill="#b91420"/><path d="m0 4 12 2 8-4M12 6v14" fill="none" stroke="#e45b60"/><text class="sw-text" x="2" y="14">S</text><text class="sw-text" x="10" y="14">W</text><text class="sw-year" x="8" y="19">2020</text></svg></button>
    <button class="running" aria-label="Excel"><svg viewBox="0 0 20 20"><path d="M5 1h14v18H5z" fill="#21a366"/><path d="M12 1h7v6h-7z" fill="#33c481"/><path d="M5 10h14v9H5z" fill="#107c41"/><path d="M12 7h7v6h-7z" fill="#168a4c"/><path d="M0 5h10v10H0z" fill="#107c41"/><path d="m3 7 4 6M7 7l-4 6" stroke="#fff" stroke-width="1.500"/></svg></button>
  </nav>
  <div class="tray">
    <svg viewBox="0 0 16 16"><path d="m3 10 5-5 5 5" fill="none" stroke="#eee" stroke-width="1.400"/></svg>
    <svg viewBox="0 0 16 16"><path d="M4 5h11v7H4z" fill="#fff"/><path d="M1 4h4v3H1zM3 7v5" stroke="#fff" fill="#fff"/></svg>
    <svg viewBox="0 0 16 16"><path d="M2 12C2 7 7 3 14 3M5 13c0-4 4-7 9-7M8 13.500c0-2 3-4 6-4" fill="none" stroke="#ccc" stroke-width="1.300"/><circle cx="12.500" cy="13" r="1.500" fill="#fff"/></svg>
    <svg viewBox="0 0 16 16"><path d="M1 6h3l4-4v12l-4-4H1z" fill="none" stroke="#ddd"/><path d="M10 6c1 1 1 3 0 4" fill="none" stroke="#ddd"/><path d="M12 4c2 2 2 6 0 8M14 2.500c3 3 3 8 0 11" fill="none" stroke="#889"/></svg>
    <svg class="wide" viewBox="0 0 22 14"><path d="M1 1.500h20v11H1z" fill="none" stroke="#eee"/><path d="M4 4.500h14M4 7h14" stroke="#eee" stroke-dasharray="2 1.500"/><path d="M6 10h10" stroke="#eee"/></svg>
    <span class="lang">ENG</span>
    <time class="clock">12:08 AM<br>25-Jul-20</time>
    <div class="notify"><svg viewBox="0 0 16 16"><path d="M1 1h14v11H9l-3 3v-3H1z" fill="#fff"/><path d="M3 4h10M3 6.500h10M3 9h6" stroke="#1b2733"/></svg><b>10</b></div>
  </div>
</footer>
</body>
</html>
```
FILE: styles.css
```css
:root {
  --ui: "Open Sans", "Noto Sans", sans-serif;
  --line: #8f8f8f;
  --chrome: #f7f7f7;
  --tab: #d3d3d3;
}
* { box-sizing: border-box; }
body {
  margin: 0;
  min-height: 100vh;
  display: flex;
  flex-direction: column;
  background: var(--chrome);
  color: #222;
  font: 9px/13px var(--ui);
}
button, input { font: inherit; color: inherit; border: 0; padding: 0; margin: 0; background: none; }
button { display: inline-flex; align-items: center; justify-content: center; }
svg { width: 14px; height: 14px; flex: none; }
.defs { position: absolute; width: 0; height: 0; }

.drop { flex: none; width: 4px; border: 2px solid transparent; border-top-color: #333; border-bottom: 0; }
.faded { opacity: .4; }
.tri-right { border: 4px solid transparent; border-left: 5px solid #222; border-right: 0; }
.tri-left { border: 4px solid transparent; border-right: 5px solid #222; border-left: 0; }
.tri-up { border: 2px solid transparent; border-bottom-color: #333; border-top: 0; margin: 0 5px; }

/* Title bar */
.titlebar { display: flex; align-items: center; height: 22px; border-bottom: 1px solid var(--line); position: relative; }
.brand { align-self: flex-start; display: flex; align-items: center; gap: 4px; width: 97px; height: 24px; margin-left: 7px; padding-left: 3px; background: #fff; border: 1px solid #ccc; border-top: 0; z-index: 1; color: #d8372c; }
.brand-mark { width: 19px; height: 19px; }
.brand-name { font: italic 11px/20px var(--ui); }
.brand-more { width: 15px; height: 21px; border-right: 2px solid #ccc; }
.quick { display: flex; align-items: center; margin-left: 18px; }
.quick button { width: 17px; height: 17px; }
.quick .drop { margin: 0 3px 0 2px; }
.quick .pressed { width: 18px; background: #b5b5b5; border: 1px solid #777; }
.boxed { display: flex; align-items: center; width: 9px; height: 17px; margin-right: 2px; border: 1px solid #bbb; border-left: 0; }
.doc-title { position: absolute; left: 675px; margin: 0; font: 9px/22px var(--ui); }
.title-right { display: flex; align-items: center; gap: 7px; margin-left: auto; padding-right: 3px; color: #333; }
.help-search { display: flex; align-items: center; width: 168px; height: 20px; padding: 0 4px; border: 1px solid #333; background: #eff1f4; }
.help-search input { flex: 1; min-width: 0; padding-left: 5px; outline: 0; }
.help-search input::placeholder, .os-search input::placeholder { color: inherit; opacity: .75; }
.help-search svg { margin-right: 4px; }
.help-q { width: 12px; height: 12px; border: 1px solid #345; border-radius: 50%; background: #fff; color: #176293; font: bold 9px/10px var(--ui); text-align: center; }
.title-right button svg { width: 11px; height: 11px; }
.title-right button:first-of-type svg { width: 13px; height: 13px; }
.title-right .question { font-weight: bold; font-size: 12px; }

/* Ribbon */
.ribbon {
  display: grid;
  grid-template-columns: 59px 82px 32px 70px 118px 42px 85px 63px 46px 48px 59px 47px 67px 48px 49px 46px 70px;
  height: 58px;
  border-bottom: 1px solid var(--line);
}
.cmd { display: block; padding: 7px 0 0; text-align: center; white-space: nowrap; }
.cmd svg { display: block; margin: 0 auto; }
.cmd.menu { padding: 0 0 1px; }
.cmd.single { padding-bottom: 13px; }
.cmd .drop { display: block; margin: 13px auto 0; }
.cmd.off { color: #b6b6b6; }
.cmd.end { background: linear-gradient(#ccc, #ccc) right 4px / 1px 50px no-repeat; }
.cmd.active { background: #b0b0b0; border: 1px solid #777; margin: 4px 0 2px; padding: 0 0 9px; }

/* Work area */
.workspace {
  flex: 1;
  display: flex;
  flex-direction: column;
  background:
    radial-gradient(ellipse 310px 140px at 190px 300px, rgba(218,223,235,.9), rgba(225,229,239,.6) 40%, transparent 100%),
    linear-gradient(transparent 270px, #fefefe 430px),
    radial-gradient(ellipse 420px 480px at 1100px 190px, #dee2ec 0, rgba(223,227,237,.85) 45%, transparent 100%),
    #fefefe;
}
.tab-row { display: flex; justify-content: space-between; height: 18px; }
.cmd-tabs { display: grid; grid-template-columns: 60px 41px 41px 47px 49px 115px 37px 105px 127px; border-bottom: 1px solid var(--line); }
.tab { font-size: 10px; background: var(--tab); border-right: 1px solid #888; white-space: nowrap; }
.tab.current { background: var(--chrome); font-weight: bold; }
.doc-controls { display: flex; align-items: center; gap: 6px; padding-right: 8px; color: #999; }
.doc-controls svg { width: 11px; height: 11px; }
.stage { flex: 1; display: flex; }

/* Feature manager */
.panel { width: 182px; flex: none; display: flex; flex-direction: column; background: var(--chrome); border-right: 1px solid var(--line); border-left: 1px solid #ccc; overflow: hidden; }
.grip { height: 20px; display: flex; justify-content: center; padding-top: 8px; border-bottom: 1px solid #ccc; }
.grip i, .panel-handle i { width: 4px; height: 4px; border: 1px solid #999; border-radius: 50%; }
.panel-tabs { display: flex; height: 17px; margin-bottom: 3px; border-bottom: 1px solid #aaa; }
.panel-tabs button { width: 27px; background: var(--tab); border-right: 1px solid #aaa; flex: none; }
.panel-tabs svg { width: 13px; height: 13px; }
.panel-tabs .current { background: #fff; }
.panel-tabs .cut { width: 15px; border: 0; overflow: hidden; }
.panel-tabs .arrow { width: 15px; background: #eee; }
.panel-tabs .arrow i { border-width: 3px; }
.filter { display: flex; align-items: center; gap: 1px; height: 19px; margin: 0 3px 0 2px; padding-left: 2px; border: 1px solid #bbb; }
.filter svg { width: 14px; height: 14px; }
.filter input { flex: 1; min-width: 0; outline: 0; }
.tree { list-style: none; margin: 0; padding: 0; font-size: 10px; line-height: 16px; }
.tree li { display: flex; align-items: center; gap: 2px; height: 16px; padding-left: 17px; white-space: nowrap; position: relative; }
.tree svg { width: 12px; height: 12px; }
.tree .root { padding-left: 2px; }
.tree .sub { padding-left: 32px; }
.tree .branch::before { content: ""; position: absolute; left: 6px; top: 5px; border: 2px solid transparent; border-left: 3px solid #555; border-right: 0; }
.tree .sub.branch::before { left: 21px; }
.tree .open::before { border: 2px solid transparent; border-top: 3px solid #555; border-bottom: 0; }
.rollback { height: 2px; background: #3f8cc0; }
.hscroll { display: flex; margin-top: auto; height: 14px; margin-bottom: 3px; background: #eee; }
.hscroll button { width: 14px; }
.hscroll svg { width: 8px; height: 8px; }
.hscroll i { width: 87px; background: #cdcdcd; margin-right: auto; }

/* Canvas and its overlays */
.canvas { flex: 1; min-width: 0; position: relative; display: flex; }
.model { width: 100%; height: auto; flex: 1; }
.triad { font: 8px var(--ui); }
.panel-handle { position: absolute; left: 0; top: 255px; width: 8px; height: 32px; display: flex; align-items: center; justify-content: center; border: 1px solid #bbb; border-left: 0; background: var(--chrome); }
.heads-up { position: absolute; top: 3px; left: 430px; display: flex; align-items: center; gap: 3px; }
.heads-up svg { width: 14px; height: 14px; }
.heads-up .drop { margin: 0 2px 0 1px; opacity: .6; }
.task-pane { position: absolute; top: 20px; right: 0; display: flex; flex-direction: column; width: 22px; border: 1px solid var(--line); border-right: 0; }
.task-pane button { height: 20px; background: var(--tab); border-bottom: 1px solid var(--line); }
.task-pane button:last-child { border-bottom: 0; }
.task-pane svg { width: 13px; height: 13px; }
.task-pane .current { background: #fff; }
.tooltip { position: absolute; left: 533px; top: 446px; padding: 0 2px; border: 1px solid #777; background: #fff; color: #555; font-size: 10px; line-height: 14px; box-shadow: 2px 2px 1px #888; white-space: nowrap; }

/* View tabs and status */
.view-tabs { display: flex; height: 15px; border-top: 1px solid #ccc; border-bottom: 1px solid #aaa; }
.tab-nav { display: flex; width: 55px; }
.tab-nav button { flex: 1; background: #a9a9bf; border: 1px solid #8f8fa5; border-left-color: #c5c5d5; }
.tab-nav svg { width: 8px; height: 8px; fill: #8585a0; stroke: #8585a0; }
.vtab { padding: 0 9px; background: var(--tab); border-right: 1px solid #999; font-size: 10px; }
.vtab.current { background: #fff; font-weight: bold; }
.status { display: flex; justify-content: space-between; align-items: center; height: 14px; font-size: 10px; padding-left: 1px; }
.status svg { width: 11px; height: 11px; }
.status-right { display: flex; align-items: center; gap: 12px; padding-right: 2px; }
.status .state { margin-left: 6px; }
.units { margin-left: 38px; }

/* Taskbar */
.taskbar { display: flex; height: 33px; background: #1b2733; color: #eee; }
.start { width: 40px; background: #152238; }
.start svg { width: 15px; height: 15px; }
.os-search { display: flex; align-items: center; gap: 8px; width: 286px; padding-left: 10px; background: #333; border: 1px solid #555; border-bottom: 0; }
.os-search input { flex: 1; font-size: 12px; outline: 0; }
.apps { display: flex; }
.apps button { width: 41px; border-bottom: 2px solid transparent; }
.apps .task-view { width: 43px; }
.apps svg { width: 20px; height: 20px; }
.apps .thin { width: 15px; height: 15px; }
.apps .running { background: linear-gradient(#76b9ed, #76b9ed) center 31px / 34px 2px no-repeat; }
.apps .focus { background: linear-gradient(#76b9ed, #76b9ed) 0 31px / 41px 2px no-repeat #47525c; }
.sw-text { font: bold 10px "Liberation Sans", sans-serif; fill: #fff; }
.sw-year { font: bold 5px "Liberation Sans", sans-serif; fill: #fff; }
.tray { display: flex; align-items: center; gap: 6px; margin-left: auto; padding-right: 10px; font-size: 10px; }
.tray .wide { width: 20px; height: 13px; margin: 0 2px; }
.clock { width: 55px; text-align: center; line-height: 15px; }
.notify { position: relative; width: 22px; height: 18px; margin-left: 6px; }
.notify svg { width: 15px; height: 15px; }
.notify b { position: absolute; left: 6px; top: 6px; width: 14px; height: 14px; border: 1px solid #999; border-radius: 50%; background: #1b2733; font: 9px/12px var(--ui); text-align: center; }
```
